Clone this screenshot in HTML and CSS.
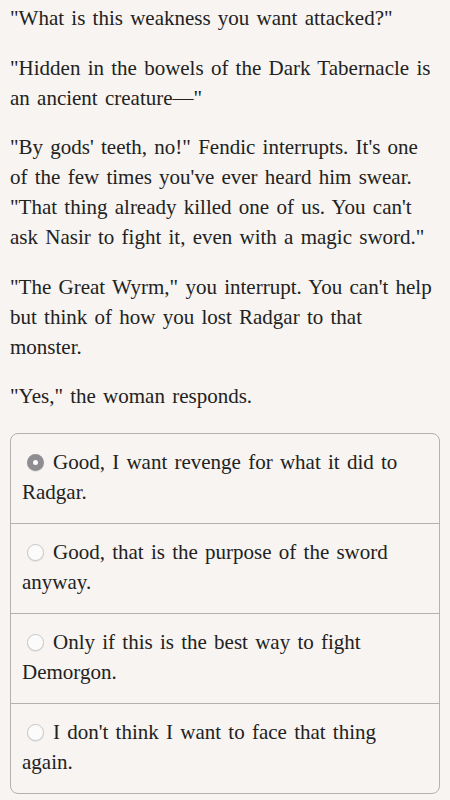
FILE: index.html
```html
<!DOCTYPE html>
<html lang="en">
<head>
    <meta charset="UTF-8">
    <meta name="viewport" content="width=device-width, initial-scale=1.0">
    <title>The Great Wyrm</title>
    <link rel="stylesheet" href="styles.css">
</head>
<body>
    <div class="story">
        <p>"What is this weakness you want attacked?"</p>
        <p>"Hidden in the bowels of the Dark Tabernacle is an ancient creature—"</p>
        <p>"By gods' teeth, no!" Fendic interrupts. It's one of the few times you've ever heard him swear. "That thing already killed one of us. You can't ask Nasir to fight it, even with a magic sword."</p>
        <p>"The Great Wyrm," you interrupt. You can't help but think of how you lost Radgar to that monster.</p>
        <p>"Yes," the woman responds.</p>
    </div>

    <div class="choices">
        <div class="choice selected"><span class="radio"></span>Good, I want revenge for what it did to Radgar.</div>
        <div class="choice"><span class="radio"></span>Good, that is the purpose of the sword anyway.</div>
        <div class="choice"><span class="radio"></span>Only if this is the best way to fight Demorgon.</div>
        <div class="choice"><span class="radio"></span>I don't think I want to face that thing again.</div>
    </div>
</body>
</html>
```

FILE: styles.css
```css
body {
    margin: 0;
    padding: 3px 10px 10px;
    background-color: #f7f4f1;
    color: #222;
    font-family: "Liberation Serif", serif;
    font-size: 21px;
    word-spacing: 2px;
    line-height: 30px;
}
.story p {
    margin: 0 0 19.5px;
}
.story p:last-child {
    margin-bottom: 22px;
}
.choices {
    border: 1px solid #b2b2b2;
    border-radius: 8px;
}
.choice {
    padding: 13px 11px 16px;
    border-bottom: 1px solid #b2b2b2;
}
.choice:last-child {
    border-bottom: none;
}
.radio {
    display: inline-block;
    box-sizing: border-box;
    width: 17px;
    height: 17px;
    margin: 0 9px 0 5px;
    vertical-align: -2px;
    border-radius: 50%;
    border: 1px solid #c8c8c8;
    background: #fbfbfb;
    box-shadow: 0 1px 1px rgba(0, 0, 0, 0.08);
}
.selected .radio {
    border: 6px solid #8e8e92;
    background: #fff;
}
```
